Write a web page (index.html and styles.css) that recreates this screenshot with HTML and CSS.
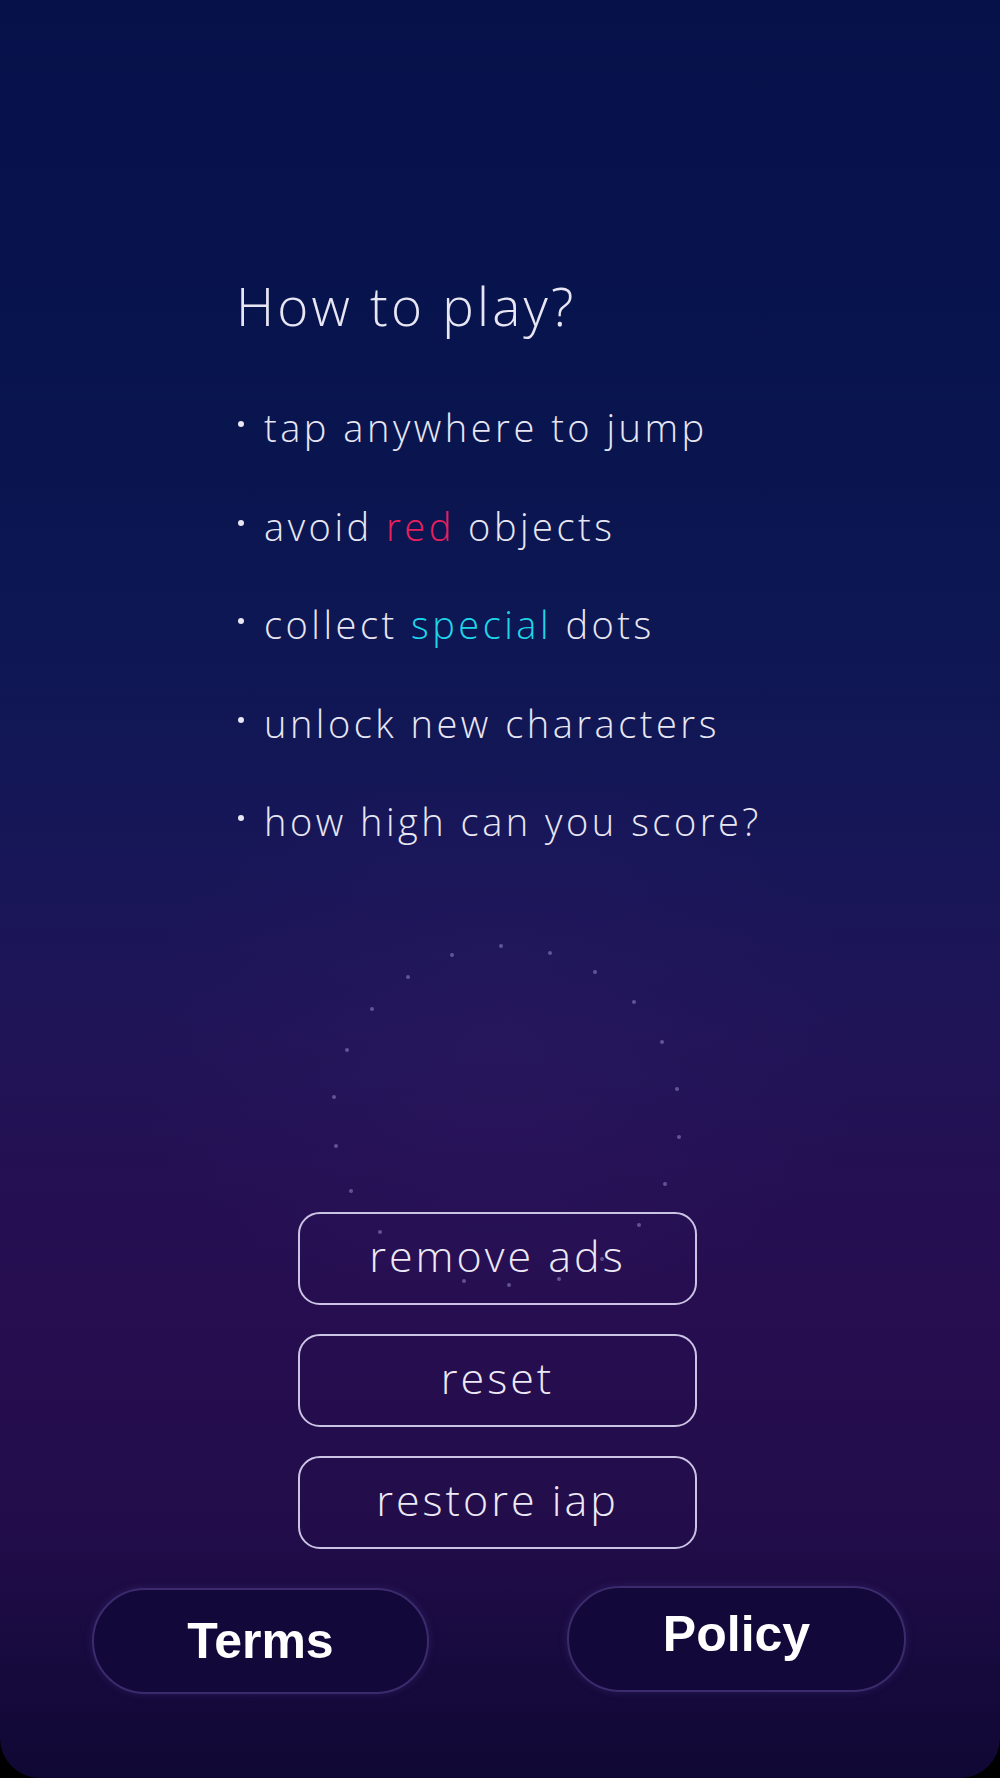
FILE: index.html
```html
<!DOCTYPE html>
<html lang="en">
<head>
    <meta charset="UTF-8">
    <meta name="viewport" content="width=device-width, initial-scale=1.0">
    <title>How to play</title>
    <link rel="stylesheet" href="styles.css">
</head>
<body>
    <div class="screen">
        <!-- floating dots behind the menu -->
        <div class="stars">
            <span class="star" style="left:499px;top:944px"></span>
            <span class="star" style="left:548px;top:951px"></span>
            <span class="star" style="left:450px;top:953px"></span>
            <span class="star" style="left:593px;top:970px"></span>
            <span class="star" style="left:406px;top:975px"></span>
            <span class="star" style="left:632px;top:1000px"></span>
            <span class="star" style="left:370px;top:1007px"></span>
            <span class="star" style="left:660px;top:1040px"></span>
            <span class="star" style="left:345px;top:1048px"></span>
            <span class="star" style="left:675px;top:1087px"></span>
            <span class="star" style="left:332px;top:1095px"></span>
            <span class="star" style="left:677px;top:1135px"></span>
            <span class="star" style="left:334px;top:1144px"></span>
            <span class="star" style="left:663px;top:1182px"></span>
            <span class="star" style="left:349px;top:1189px"></span>
            <span class="star" style="left:378px;top:1230px"></span>
            <span class="star" style="left:637px;top:1223px"></span>
            <span class="star" style="left:462px;top:1279px"></span>
            <span class="star" style="left:507px;top:1283px"></span>
            <span class="star" style="left:557px;top:1277px"></span>
            <span class="star" style="left:600px;top:1257px"></span>
        </div>

        <!-- Instructions -->
        <div class="howto">
            <h1>How to play?</h1>
            <ul class="rules">
                <li><span class="dot"></span>tap anywhere to jump</li>
                <li><span class="dot"></span>avoid <span class="red">red</span> objects</li>
                <li><span class="dot"></span>collect <span class="cyan">special</span> dots</li>
                <li><span class="dot"></span>unlock new characters</li>
                <li><span class="dot"></span>how high can you score?</li>
            </ul>
        </div>

        <!-- Menu -->
        <div class="menu">
            <button class="outline-btn">remove ads</button>
            <button class="outline-btn">reset</button>
            <button class="outline-btn">restore iap</button>
        </div>

        <!-- Footer links -->
        <div class="footer">
            <button class="pill-btn">Terms</button>
            <button class="pill-btn policy">Policy</button>
        </div>
    </div>
</body>
</html>
```

FILE: styles.css
```css
html, body {
    margin: 0;
    padding: 0;
    background: #000;
}
body {
    font-family: 'Open Sans', 'Lato', sans-serif;
    color: #e8e6f2;
}
.screen {
    position: relative;
    width: 1000px;
    height: 1778px;
    overflow: hidden;
    border-radius: 0 0 40px 40px;
    background:
        radial-gradient(ellipse 520px 420px at 500px 1050px, rgba(60, 30, 110, 0.25), rgba(60, 30, 110, 0) 70%),
        linear-gradient(180deg, #06114a 0%, #08144e 20%, #0d1753 35%, #171658 48%, #1f1456 58%, #250f52 68%, #260d4f 76%, #220d4a 86%, #160a3d 94%, #100834 100%);
}
.stars {
    position: absolute;
    inset: 0;
    pointer-events: none;
}
.star {
    position: absolute;
    width: 4px;
    height: 4px;
    border-radius: 50%;
    background: rgba(160, 150, 210, 0.5);
}
.howto {
    position: relative;
    padding-top: 276px;
    padding-left: 236px;
}
h1 {
    margin: 0;
    font-size: 53px;
    font-weight: 300;
    line-height: 60px;
    letter-spacing: 3.2px;
}
.rules {
    list-style: none;
    margin: 42px 0 0;
    padding: 0;
}
.rules li {
    font-size: 38px;
    font-weight: 300;
    line-height: 98.5px;
    letter-spacing: 3.5px;
}
.dot {
    display: inline-block;
    width: 6px;
    height: 6px;
    margin: 0 20px 0 2px;
    border-radius: 50%;
    background: #e8e6f2;
    vertical-align: 15px;
}
.red {
    color: #ea1f5e;
}
.cyan {
    color: #1ed6e8;
}
.menu {
    position: relative;
    display: flex;
    flex-direction: column;
    align-items: center;
    gap: 29px;
    margin-top: 341px;
    padding-right: 5px;
}
.outline-btn {
    width: 399px;
    height: 93px;
    padding-bottom: 6px;
    border: 2px solid #cbc3e3;
    border-radius: 22px;
    background: transparent;
    color: #ece9f5;
    font-family: 'Open Sans', 'Lato', sans-serif;
    font-size: 43px;
    font-weight: 300;
    letter-spacing: 3px;
    cursor: pointer;
}
.footer {
    position: relative;
    display: flex;
    justify-content: space-between;
    margin-top: 39px;
    padding: 0 94px 0 92px;
}
.pill-btn {
    width: 337px;
    height: 106px;
    border: 2px solid #3b2b6c;
    border-radius: 53px;
    background: #12083a;
    box-shadow: 0 0 8px rgba(90, 70, 160, 0.25);
    color: #fff;
    font-family: 'Liberation Sans', Arial, sans-serif;
    font-size: 50px;
    font-weight: bold;
    cursor: pointer;
}
.policy {
    width: 339px;
    margin-top: -2px;
    padding-bottom: 10px;
}
```
